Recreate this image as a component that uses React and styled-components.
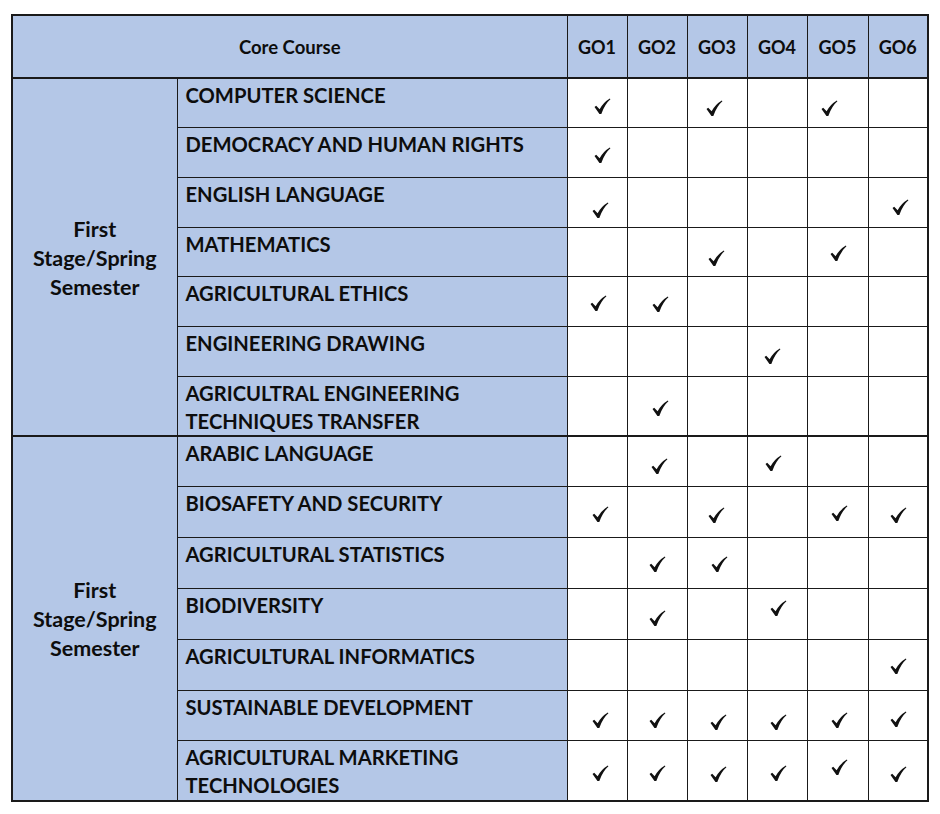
import React from "react";
import styled, { createGlobalStyle } from "styled-components";

const Global = createGlobalStyle`
  html, body { margin: 0; padding: 0; background: #ffffff; }
  body { font-family: Lato, "Open Sans", "Liberation Sans", sans-serif; color: #0d0d0d; }
`;

const Page = styled.div`
  padding: 14px 0 0 11px;
`;

const Table = styled.table`
  border-collapse: collapse;
  table-layout: fixed;
  width: 916px;
  border: 2px solid #1a1a1a;
`;

const Col = styled.col`
  width: ${(p) => p.$w}px;
`;

const HeadCell = styled.th`
  background: #b4c7e7;
  height: 61px;
  padding: 0;
  font-weight: 700;
  font-size: ${(p) => (p.$wide ? "18.5px" : "18px")};
  text-align: center;
  vertical-align: middle;
  border: 1px solid #1a1a1a;
  border-bottom: 2px solid #1a1a1a;
`;

const Row = styled.tr`
  height: ${(p) => p.$h}px;
  & > td { border-top: ${(p) => (p.$section ? "2px" : "1px")} solid #1a1a1a; }
`;

const SemesterCell = styled.td`
  background: #b4c7e7;
  border: 1px solid #1a1a1a;
  border-top: 2px solid #1a1a1a;
  text-align: center;
  vertical-align: middle;
  font-weight: 700;
  font-size: 21.5px;
  line-height: 29px;
  padding: 3px 0 0;
`;

const CourseCell = styled.td`
  background: #b4c7e7;
  border: 1px solid #1a1a1a;
  vertical-align: top;
  padding: 2px 6px 0 8px;
  font-weight: 700;
  font-size: 20.2px;
  line-height: 28px;
`;

const Line = styled.div`
  white-space: nowrap;
`;

const MarkCell = styled.td`
  background: #ffffff;
  border: 1px solid #1a1a1a;
  padding: 0;
  text-align: center;
  vertical-align: middle;
`;

const CheckSvg = styled.svg`
  display: inline-block;
  width: 17px;
  height: 17px;
  vertical-align: middle;
  transform: translate(${(p) => p.$dx}px, ${(p) => p.$dy}px);
`;

const Check = ({ dx = 0, dy = 0 }) => (
  <CheckSvg viewBox="0 0 20 20" $dx={dx} $dy={dy}>
    <path
      d="M0.6 10.6 L2.6 9.1 L6.6 13.2 Q11 5.2 18.6 0.6 L19.3 1.6 Q12.8 7.2 8.6 18.8 L6.4 18.8 Z"
      fill="#111"
    />
  </CheckSvg>
);

const GOS = ["GO1", "GO2", "GO3", "GO4", "GO5", "GO6"];
const COL_WIDTHS = [165, 390, 60, 60, 60, 60, 61, 60];

const sections = [
  {
    label: ["First", "Stage/Spring", "Semester"],
    rows: [
      { name: ["COMPUTER SCIENCE"], h: 49, marks: { 0: [5, 2], 2: [-3, 4], 4: [-8, 4] } },
      { name: ["DEMOCRACY AND HUMAN RIGHTS"], h: 50, marks: { 0: [5, 2] } },
      { name: ["ENGLISH LANGUAGE"], h: 50, marks: { 0: [3, 7], 5: [3, 4] } },
      { name: ["MATHEMATICS"], h: 49, marks: { 2: [-1, 5], 4: [1, 0] } },
      { name: ["AGRICULTURAL ETHICS"], h: 50, marks: { 0: [1, 1], 1: [3, 2] } },
      { name: ["ENGINEERING DRAWING"], h: 50, marks: { 3: [-5, 4] } },
      { name: ["AGRICULTRAL ENGINEERING", "TECHNIQUES TRANSFER"], h: 58, marks: { 1: [3, 1] } },
    ],
  },
  {
    label: ["First", "Stage/Spring", "Semester"],
    rows: [
      { name: ["ARABIC LANGUAGE"], h: 51, marks: { 1: [2, 4], 3: [-4, 1] } },
      { name: ["BIOSAFETY AND SECURITY"], h: 51, marks: { 0: [3, 1], 2: [-1, 2], 4: [2, 0], 5: [1, 2] } },
      { name: ["AGRICULTURAL STATISTICS"], h: 51, marks: { 1: [0, 0], 2: [2, 0] } },
      { name: ["BIODIVERSITY"], h: 51, marks: { 1: [0, 3], 3: [1, -7] } },
      { name: ["AGRICULTURAL INFORMATICS"], h: 51, marks: { 5: [1, 0] } },
      {
        name: ["SUSTAINABLE DEVELOPMENT"],
        h: 50,
        marks: { 0: [3, 3], 1: [0, 3], 2: [1, 5], 3: [1, 5], 4: [2, 3], 5: [1, 2] },
      },
      {
        name: ["AGRICULTURAL MARKETING", "TECHNOLOGIES"],
        h: 60,
        marks: { 0: [3, 2], 1: [0, 2], 2: [1, 3], 3: [1, 2], 4: [2, -4], 5: [1, 3] },
      },
    ],
  },
];

export default function App() {
  return (
    <Page>
      <Global />
      <Table>
        <colgroup>
          {COL_WIDTHS.map((w, i) => (
            <Col key={i} $w={w} />
          ))}
        </colgroup>
        <thead>
          <tr>
            <HeadCell colSpan={2} $wide>Core Course</HeadCell>
            {GOS.map((g) => (
              <HeadCell key={g}>{g}</HeadCell>
            ))}
          </tr>
        </thead>
        <tbody>
          {sections.map((sec, si) =>
            sec.rows.map((row, ri) => (
              <Row key={`${si}-${ri}`} $h={row.h} $section={ri === 0 && si > 0}>
                {ri === 0 && (
                  <SemesterCell rowSpan={sec.rows.length}>
                    {sec.label.map((l, i) => (
                      <Line key={i}>{l}</Line>
                    ))}
                  </SemesterCell>
                )}
                <CourseCell>
                  {row.name.map((n, i) => (
                    <Line key={i}>{n}</Line>
                  ))}
                </CourseCell>
                {GOS.map((g, gi) => (
                  <MarkCell key={g}>
                    {row.marks[gi] ? <Check dx={row.marks[gi][0]} dy={row.marks[gi][1]} /> : null}
                  </MarkCell>
                ))}
              </Row>
            ))
          )}
        </tbody>
      </Table>
    </Page>
  );
}
